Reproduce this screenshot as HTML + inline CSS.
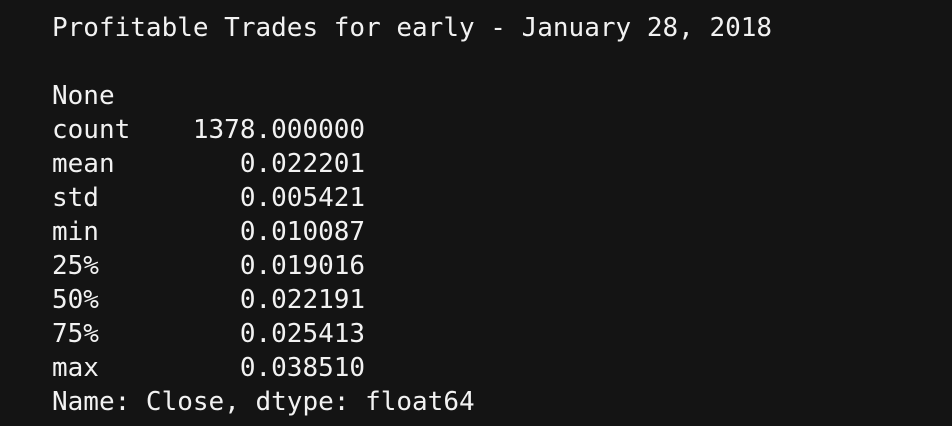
<!DOCTYPE html>
<html><head><meta charset="utf-8"><style>
html,body{margin:0;padding:0;background:#141414;width:952px;height:426px;overflow:hidden}
pre{margin:0;padding:11px 0 0 52px;font-family:"DejaVu Sans Mono","Liberation Mono",monospace;font-size:26px;line-height:34px;color:#f2f2f2}
</style></head><body><pre>Profitable Trades for early - January 28, 2018

None
count    1378.000000
mean        0.022201
std         0.005421
min         0.010087
25%         0.019016
50%         0.022191
75%         0.025413
max         0.038510
Name: Close, dtype: float64</pre></body></html>
